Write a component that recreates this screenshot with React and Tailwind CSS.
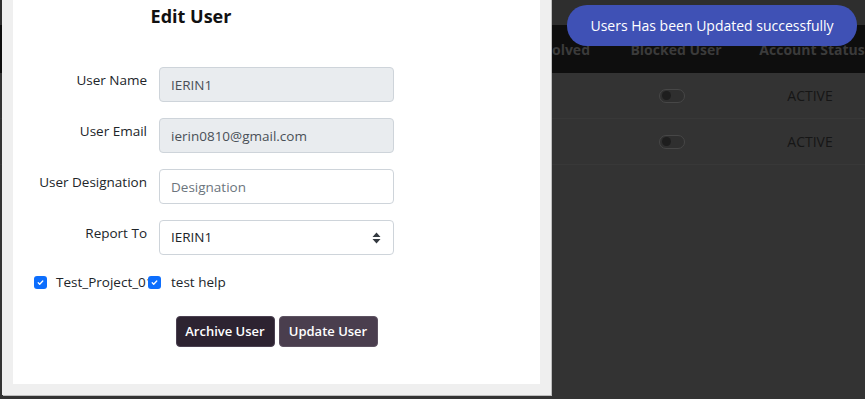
import React from 'react';

const Check = () => (
  <span className="w-[13px] h-[13px] rounded-[3px] bg-[#0d6efd] flex items-center justify-center shrink-0">
    <svg width="9" height="9" viewBox="0 0 20 20" fill="none">
      <path d="M5 10.5l3.2 3.2L15 6.8" stroke="white" strokeWidth="3" strokeLinecap="round" strokeLinejoin="round" />
    </svg>
  </span>
);

const Toggle = () => (
  <span className="w-[26px] h-[14px] shrink-0 rounded-full border border-[#474747] bg-[#2f2f2f] flex items-center px-[2px]">
    <span className="w-[9px] h-[9px] rounded-full bg-[#1e1e1e]" />
  </span>
);

const Field = ({ label, children }) => (
  <>
    <label className="text-right text-[13.5px] leading-[21px] pt-[3px] text-[#212529]">{label}</label>
    {children}
  </>
);

const App = () => {
  const inputBase = 'h-[35px] w-full rounded-[4px] border border-[#ced4da] px-[11px] text-[13.5px] outline-none';

  return (
    <div className="relative w-[865px] h-[399px] overflow-hidden bg-[#333333] font-['Open_Sans',sans-serif]">
      {/* page behind the modal */}
      <div className="flex flex-col">
        <div className="h-[25px] bg-[#2e2e2e]" />
        <div className="h-[48px] bg-[#0e0e0e] flex items-center font-bold text-[14px] text-[#3b3b3b]">
          <div className="w-[610px] shrink-0 text-right pr-[20px]">Tickets Involved</div>
          <div className="w-[132px] shrink-0 text-center">Blocked User</div>
          <div className="w-[140px] shrink-0 text-center whitespace-nowrap">Account Status</div>
        </div>
        {[0, 1].map((i) => (
          <div key={i} className="h-[46px] flex items-center border-b border-[#383838] text-[14px] text-[#161616]">
            <div className="w-[610px] shrink-0" />
            <div className="w-[124px] shrink-0 flex justify-center">
              <Toggle />
            </div>
            <div className="w-[152px] shrink-0 text-center">ACTIVE</div>
          </div>
        ))}
      </div>

      {/* toast */}
      <div className="absolute left-[567px] top-[5px] w-[290px] h-[41px] rounded-[20px] bg-[#3f51b5] text-white text-[14px] flex items-center justify-center">
        Users Has been Updated successfully
      </div>

      {/* modal */}
      <div className="absolute left-[2px] top-[-20px] w-[549px] h-[415px] bg-[#efefef] p-[11px] shadow-[1px_1px_0_#bdbdbd]">
        <div className="h-full bg-white pt-[13px]">
          <h2 className="w-[356px] text-center text-[18px] leading-[24px] font-bold text-[#111]">Edit User</h2>

          <div className="mt-[39px] grid grid-cols-[134px_235px] gap-x-[12px] gap-y-[16px]">
            <Field label="User Name">
              <input disabled value="IERIN1" readOnly className={`${inputBase} bg-[#e9ecef] text-[#495057]`} />
            </Field>
            <Field label="User Email">
              <input disabled value="ierin0810@gmail.com" readOnly className={`${inputBase} bg-[#e9ecef] text-[#495057]`} />
            </Field>
            <Field label="User Designation">
              <input placeholder="Designation" className={`${inputBase} bg-white placeholder:text-[#6c757d]`} />
            </Field>
            <Field label="Report To">
              <div className={`${inputBase} bg-white text-[#212529] flex items-center justify-between pr-[12px]`}>
                <span>IERIN1</span>
                <svg width="9" height="12" viewBox="0 0 9 12">
                  <path d="M4.5 0.5L8.5 5H0.5z M4.5 11.5L0.5 7H8.5z" fill="#343a40" />
                </svg>
              </div>
            </Field>
          </div>

          <div className="mt-[17px] pl-[21px] flex text-[13.5px] leading-[21px] text-[#212529]">
            <div className="w-[114px] flex items-center gap-[9px] whitespace-nowrap">
              <Check />
              <span>Test_Project_01</span>
            </div>
            <div className="flex items-center gap-[10px] whitespace-nowrap">
              <Check />
              <span>test help</span>
            </div>
          </div>

          <div className="mt-[23px] flex justify-center gap-[4px]">
            <button className="w-[99px] h-[31px] rounded-[4px] border border-[#4a4050] bg-[#2d2331] text-white text-[13px] font-semibold">
              Archive User
            </button>
            <button className="w-[99px] h-[31px] rounded-[4px] border border-[#5d5261] bg-[#4a3e4e] text-white text-[13px] font-semibold">
              Update User
            </button>
          </div>
        </div>
      </div>
    </div>
  );
};

export default App;
